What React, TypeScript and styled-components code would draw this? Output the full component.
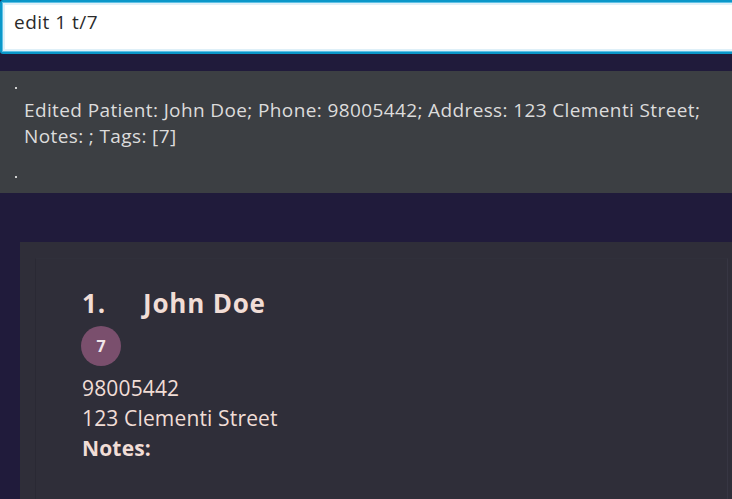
import React from "react";
import styled, { createGlobalStyle } from "styled-components";

const Global = createGlobalStyle`
  html, body {
    margin: 0;
    padding: 0;
    background: #201b3b;
    overflow: hidden;
  }
  body {
    font-family: "Open Sans", "Noto Sans", sans-serif;
  }
`;

const Page = styled.div`
  width: 732px;
  height: 499px;
  display: flex;
  flex-direction: column;
  background: #201b3b;
  overflow: hidden;
`;

const CommandBox = styled.div`
  height: 54px;
  box-sizing: border-box;
  margin-right: -6px;
  border: 2px solid #0a97c9;
  border-radius: 3px;
  box-shadow: inset 0 0 0 1px #5fc0e4, inset 0 0 0 3px #dff0f8;
  background: #ffffff;
  display: flex;
  align-items: flex-start;
  padding: 5px 0 0 12px;
`;

const CommandText = styled.span`
  font-family: "Open Sans", sans-serif;
  font-size: 19px;
  letter-spacing: 0.5px;
  line-height: 30px;
  color: #2b2b2b;
`;

const ResultPanel = styled.div`
  margin-top: 17px;
  height: 122px;
  background: #3c3f43;
  position: relative;
  display: flex;
  align-items: flex-start;
  padding: 26px 20px 0 24px;
  box-sizing: border-box;
`;

const ResultText = styled.div`
  font-family: "Open Sans", sans-serif;
  font-size: 19px;
  letter-spacing: 0.38px;
  line-height: 26px;
  color: #dcdcdc;
  white-space: nowrap;
`;

const Tick = styled.span<{ $top: number }>`
  position: absolute;
  left: 15px;
  top: ${(p) => p.$top}px;
  width: 2px;
  height: 2px;
  background: #d0d0d0;
`;

const ListArea = styled.div`
  flex: 1;
  padding: 49px 0 0 20px;
  display: flex;
`;

const CardOuter = styled.div`
  flex: 1;
  background: #2f2e39;
  padding: 16px 4px 0 15px;
  display: flex;
`;

const CardInner = styled.div`
  flex: 1;
  border-left: 1px solid #2a2934;
  border-top: 1px solid #30303b;
  border-right: 1px solid #373643;
  padding: 26px 0 0 46px;
  display: flex;
  flex-direction: column;
  color: #f1ddd6;
  font-family: "Open Sans", sans-serif;
`;

const NameRow = styled.div`
  display: flex;
  font-size: 26px;
  letter-spacing: 0.8px;
  font-weight: 700;
  line-height: 36px;
`;

const Index = styled.span`
  width: 61px;
`;

const TagRow = styled.div`
  display: flex;
  margin-top: 5px;
  margin-left: -1px;
`;

const Tag = styled.span`
  width: 40px;
  height: 40px;
  border-radius: 50%;
  background: #7a4f6d;
  color: #f1e6ea;
  font-size: 16px;
  font-weight: 700;
  display: flex;
  align-items: center;
  justify-content: center;
`;

const Field = styled.div<{ $bold?: boolean }>`
  font-size: 21px;
  letter-spacing: 0.15px;
  line-height: 30px;
  font-weight: ${(p) => (p.$bold ? 700 : 400)};
`;

const FirstField = styled(Field)`
  margin-top: 7px;
`;

export default function App() {
  return (
    <Page>
      <Global />
      <CommandBox>
        <CommandText>edit 1 t/7</CommandText>
      </CommandBox>
      <ResultPanel>
        <Tick $top={16} />
        <Tick $top={105} />
        <ResultText>
          Edited Patient: John Doe; Phone: 98005442; Address: 123 Clementi Street;
          <br />
          Notes: ; Tags: [7]
        </ResultText>
      </ResultPanel>
      <ListArea>
        <CardOuter>
          <CardInner>
            <NameRow>
              <Index>1.</Index>
              <span>John Doe</span>
            </NameRow>
            <TagRow>
              <Tag>7</Tag>
            </TagRow>
            <FirstField>98005442</FirstField>
            <Field>123 Clementi Street</Field>
            <Field $bold>Notes:</Field>
          </CardInner>
        </CardOuter>
      </ListArea>
    </Page>
  );
}
